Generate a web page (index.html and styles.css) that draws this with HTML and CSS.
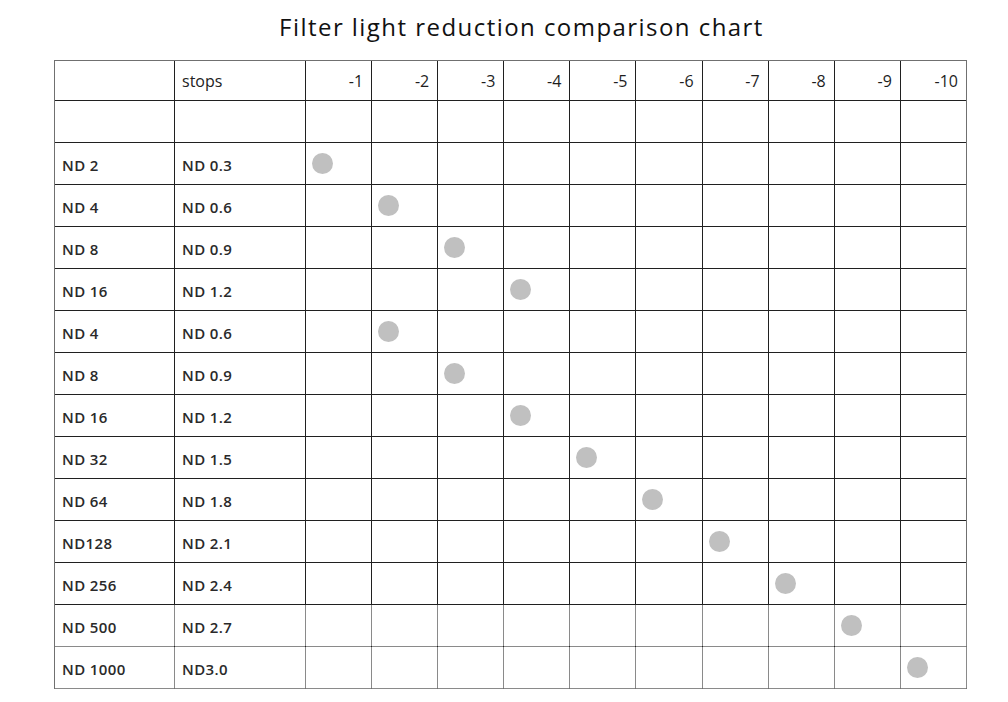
FILE: index.html
```html
<!DOCTYPE html>
<html lang="en">
<head>
<meta charset="utf-8">
<title>Filter light reduction comparison chart</title>
<link rel="stylesheet" href="styles.css">
</head>
<body>
<main class="page">
  <h1 class="title">Filter light reduction comparison chart</h1>
  <div class="chart-frame">
    <div class="chart">
      <div class="cell head"></div>
      <div class="cell head name">stops</div>
      <div class="cell head num">-1</div>
      <div class="cell head num">-2</div>
      <div class="cell head num">-3</div>
      <div class="cell head num">-4</div>
      <div class="cell head num">-5</div>
      <div class="cell head num">-6</div>
      <div class="cell head num">-7</div>
      <div class="cell head num">-8</div>
      <div class="cell head num">-9</div>
      <div class="cell head num">-10</div>

      <div class="cell"></div><div class="cell"></div>
      <div class="cell"></div><div class="cell"></div><div class="cell"></div><div class="cell"></div><div class="cell"></div>
      <div class="cell"></div><div class="cell"></div><div class="cell"></div><div class="cell"></div><div class="cell"></div>
    </div>
  </div>
</main>
<script src="script.js"></script>
</body>
</html>
```

FILE: script.js
```js
const rows = [
  ["ND 2", "ND 0.3", 1],
  ["ND 4", "ND 0.6", 2],
  ["ND 8", "ND 0.9", 3],
  ["ND 16", "ND 1.2", 4],
  ["ND 4", "ND 0.6", 2],
  ["ND 8", "ND 0.9", 3],
  ["ND 16", "ND 1.2", 4],
  ["ND 32", "ND 1.5", 5],
  ["ND 64", "ND 1.8", 6],
  ["ND128", "ND 2.1", 7],
  ["ND 256", "ND 2.4", 8],
  ["ND 500", "ND 2.7", 9],
  ["ND 1000", "ND3.0", 10]
];
const chart = document.querySelector(".chart");
rows.forEach(([nd, od, stop], r) => {
  const soft = r >= rows.length - 2 ? " soft" : "";
  const a = document.createElement("div");
  a.className = "cell label" + soft;
  a.textContent = nd;
  chart.appendChild(a);
  const b = document.createElement("div");
  b.className = "cell label" + soft;
  b.textContent = od;
  chart.appendChild(b);
  for (let i = 1; i <= 10; i++) {
    const c = document.createElement("div");
    c.className = "cell mark" + soft;
    if (i === stop) {
      const d = document.createElement("span");
      d.className = "dot";
      c.appendChild(d);
    }
    chart.appendChild(c);
  }
});
```

FILE: styles.css
```css
html, body {
  margin: 0;
  padding: 0;
  background: #ffffff;
}
.page {
  width: 1008px;
  height: 702px;
  display: flex;
  flex-direction: column;
  font-family: "Open Sans", "Liberation Sans", sans-serif;
  color: #1e1e1e;
}
.title {
  margin: 0;
  padding: 12px 0 0 35px;
  font-size: 24px;
  line-height: 30px;
  font-weight: 400;
  letter-spacing: 1.45px;
  text-align: center;
  color: #111;
}
.chart-frame {
  margin: 18px 0 0 54px;
  width: 911px;
  border: 1px solid #707070;
}
.chart {
  display: grid;
  grid-template-columns: 119px 130px repeat(10, 65.1px);
  grid-template-rows: 39px repeat(14, 41px);
  gap: 1px;
  background: #202020;
}
.cell {
  background: #fff;
  display: flex;
  align-items: center;
  font-size: 16px;
  padding: 0 7px;
}
.head.name {
  color: #222;
}
.head.num {
  justify-content: flex-end;
  padding-right: 8px;
  font-size: 16px;
}
.label {
  font-weight: 600;
  font-size: 15px;
  letter-spacing: 0.4px;
  color: #2a2a2a;
  padding-top: 2px;
}
.soft {
  box-shadow: 1px 0 0 #8a8a8a, 0 1px 0 #8a8a8a;
}
.mark {
  padding: 0 0 0 6px;
}
.dot {
  width: 21px;
  height: 21px;
  border-radius: 50%;
  background: #c0c0c0;
}
```
